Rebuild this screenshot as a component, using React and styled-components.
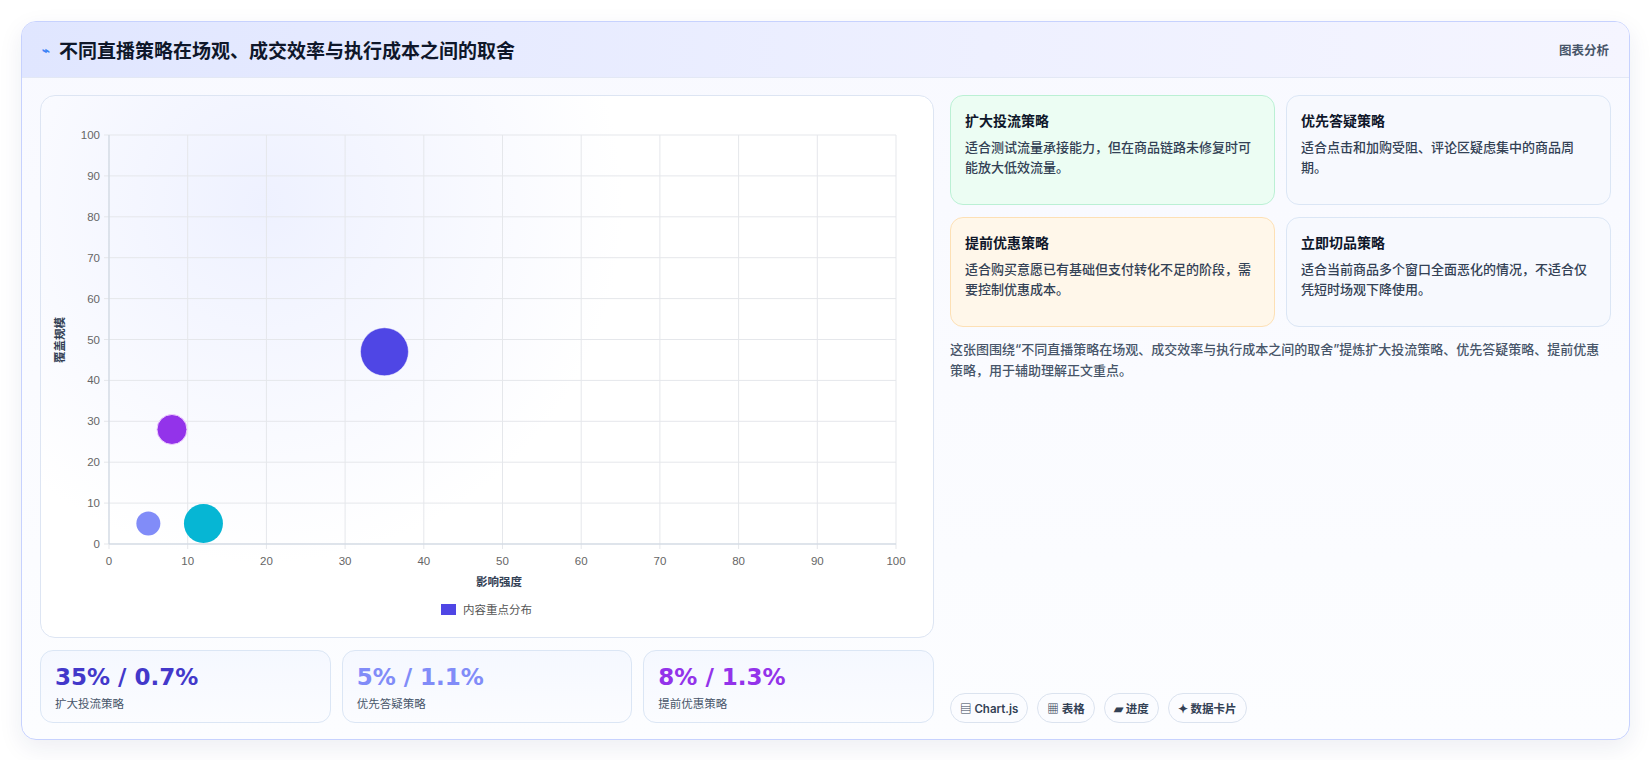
import React from "react";
import styled, { createGlobalStyle } from "styled-components";

const Global = createGlobalStyle`
  body { margin:0; background:#fff; font-family: Inter, "Noto Sans CJK SC", sans-serif; }
`;
const Page = styled.div`padding:21px 21px 20px 21px; box-sizing:border-box;`;
const Card = styled.div`
  height:719px; box-sizing:border-box; border:1px solid #c7d2fe; border-radius:15px;
  background:linear-gradient(180deg,#f8f9ff 0%,#fcfdff 100%); overflow:hidden;
  box-shadow:0 8px 24px rgba(30,41,99,0.08); display:flex; flex-direction:column;
`;
const Header = styled.div`
  height:55px; flex:none; display:flex; align-items:center; justify-content:space-between; padding:0 20px;
  background:linear-gradient(90deg,#e0e6ff 0%,#eef0ff 60%,#f5f5ff 100%); border-bottom:1px solid #e3e8f5;
`;
const Title = styled.h1`margin:0; font-size:19px; font-weight:700; color:#0f172a; display:flex; align-items:center; gap:9px;`;
const Tag = styled.span`font-size:12.5px; color:#475569; font-weight:600;`;
const Body = styled.div`flex:1; display:flex; gap:16px; padding:17px 18px 18px 18px;`;
const Left = styled.div`width:894px; flex:none; display:flex; flex-direction:column; gap:12px;`;
const ChartCard = styled.div`
  height:543px; flex:none; box-sizing:border-box; border:1px solid #dde5f3; border-radius:15px;
  background:radial-gradient(circle at 25% 20%, #eef1ff 0%, #fff 45%); position:relative;
`;
const Stats = styled.div`display:grid; grid-template-columns:repeat(3,1fr); gap:11px; height:73px;`;
const Stat = styled.div`
  border:1px solid #dbe6f5; border-radius:13px; background:linear-gradient(180deg,#f5f8ff,#fbfcff);
  padding:11px 14px; box-sizing:border-box;
`;
const StatValue = styled.div`font-family:"DejaVu Sans", sans-serif; font-size:23px; font-weight:700; color:${p=>p.c}; line-height:30px;`;
const StatLabel = styled.div`font-size:11.5px; color:#475569; margin-top:3px;`;
const Right = styled.div`flex:1; display:flex; flex-direction:column;`;
const Grid = styled.div`display:grid; grid-template-columns:1fr 1fr; gap:12px 11px; grid-auto-rows:110px;`;
const Box = styled.div`
  border:1px solid ${p=>p.b}; background:${p=>p.bg}; border-radius:13px; padding:14px 14px; box-sizing:border-box;
`;
const BoxTitle = styled.div`font-size:14px; font-weight:700; color:#0f172a; margin-bottom:7px;`;
const BoxText = styled.div`font-size:13px; color:#334155; line-height:20px; font-weight:500;`;
const Desc = styled.p`margin:12px 0 0; font-size:13px; color:#475569; line-height:21px; font-weight:500;`;
const Chips = styled.div`margin-top:auto; display:flex; gap:9px;`;
const Chip = styled.span`
  font-size:11.5px; font-weight:600; color:#334155; border:1px solid #dbe3ef; border-radius:15px; padding:6px 9px;
  background:#fbfcff;
`;

const X0=68, X1=855, Y0=448, Y1=39;
function Chart(){
  const xs=v=>X0+(X1-X0)*v/100, ys=v=>Y0-(Y0-Y1)*v/100;
  const ticks=[0,10,20,30,40,50,60,70,80,90,100];
  return (
    <svg width="894" height="541" style={{position:"absolute",left:0,top:0}} fontFamily="Liberation Sans, sans-serif">
      {ticks.map(t=>(
        <g key={t}>
          <line x1={xs(t)} x2={xs(t)} y1={Y1} y2={Y0+5} stroke="#e5e7eb"/>
          <line x1={X0-5} x2={X1} y1={ys(t)} y2={ys(t)} stroke="#e5e7eb"/>
          <text x={X0-9} y={ys(t)+4} fontSize="11.5" fill="#666" textAnchor="end">{t}</text>
          <text x={xs(t)} y={Y0+21} fontSize="11.5" fill="#666" textAnchor="middle">{t}</text>
        </g>
      ))}
      <line x1={X0} x2={X0} y1={Y1} y2={Y0} stroke="#cbd5e1"/>
      <line x1={X0} x2={X1} y1={Y0} y2={Y0} stroke="#cbd5e1"/>
      <text x={458} y={490} fontSize="11.5" fontWeight="700" fill="#334155" textAnchor="middle" fontFamily="Noto Sans CJK SC, sans-serif">影响强度</text>
      <text transform="translate(23,244) rotate(-90)" fontSize="11.5" fontWeight="700" fill="#334155" textAnchor="middle" fontFamily="Noto Sans CJK SC, sans-serif">覆盖规模</text>
      <circle cx={xs(35)} cy={ys(47)} r="24" fill="#4f46e5" stroke="#fff" strokeOpacity=".5"/>
      <circle cx={xs(8)} cy={ys(28)} r="15" fill="#9333ea" stroke="#f0d0ff"/>
      <circle cx={xs(5)} cy={ys(5)} r="12" fill="#818cf8"/>
      <circle cx={xs(12)} cy={ys(5)} r="19.5" fill="#06b6d4"/>
      <rect x="400" y="508" width="15" height="11" fill="#4f46e5"/>
      <text x="422" y="518" fontSize="11.5" fill="#555" fontFamily="Noto Sans CJK SC, sans-serif">内容重点分布</text>
    </svg>
  );
}

export default function App(){
  return (<Page><Global/>
    <Card>
      <Header>
        <Title><span style={{color:"#3b82f6",fontSize:13}}>⌁</span>不同直播策略在场观、成交效率与执行成本之间的取舍</Title>
        <Tag>图表分析</Tag>
      </Header>
      <Body>
        <Left>
          <ChartCard><Chart/></ChartCard>
          <Stats>
            <Stat><StatValue c="#4338ca">35% / 0.7%</StatValue><StatLabel>扩大投流策略</StatLabel></Stat>
            <Stat><StatValue c="#818cf8">5% / 1.1%</StatValue><StatLabel>优先答疑策略</StatLabel></Stat>
            <Stat><StatValue c="#9333ea">8% / 1.3%</StatValue><StatLabel>提前优惠策略</StatLabel></Stat>
          </Stats>
        </Left>
        <Right>
          <Grid>
            <Box b="#bbf0d4" bg="#ecfdf3"><BoxTitle>扩大投流策略</BoxTitle><BoxText>适合测试流量承接能力，但在商品链路未修复时可能放大低效流量。</BoxText></Box>
            <Box b="#dbe6f5" bg="#f7f9fe"><BoxTitle>优先答疑策略</BoxTitle><BoxText>适合点击和加购受阻、评论区疑虑集中的商品周期。</BoxText></Box>
            <Box b="#fde0b5" bg="#fff7ea"><BoxTitle>提前优惠策略</BoxTitle><BoxText>适合购买意愿已有基础但支付转化不足的阶段，需要控制优惠成本。</BoxText></Box>
            <Box b="#dbe6f5" bg="#f7f9fe"><BoxTitle>立即切品策略</BoxTitle><BoxText>适合当前商品多个窗口全面恶化的情况，不适合仅凭短时场观下降使用。</BoxText></Box>
          </Grid>
          <Desc>这张图围绕“不同直播策略在场观、成交效率与执行成本之间的取舍”提炼扩大投流策略、优先答疑策略、提前优惠策略，用于辅助理解正文重点。</Desc>
          <Chips><Chip>▤ Chart.js</Chip><Chip>▦ 表格</Chip><Chip>▰ 进度</Chip><Chip>✦ 数据卡片</Chip></Chips>
        </Right>
      </Body>
    </Card>
  </Page>);
}
